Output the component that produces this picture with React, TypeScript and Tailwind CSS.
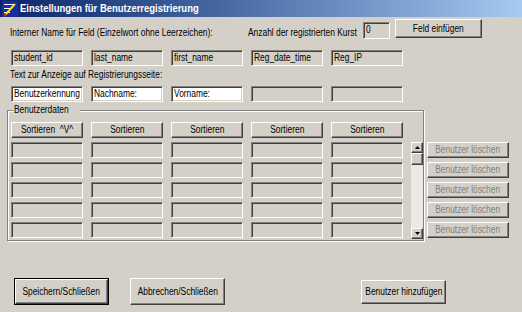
import React from 'react';

const sunken =
  'border border-t-[#808080] border-l-[#808080] border-b-white border-r-white shadow-[inset_1px_1px_0_#404040,inset_-1px_-1px_0_#d4d0c8]';
const raised =
  'border border-t-white border-l-white border-b-[#404040] border-r-[#404040] shadow-[inset_-1px_-1px_0_#808080] bg-[#d4d0c8]';

// MS Sans Serif is narrow: squeeze Arial-width text horizontally
const T = ({ children, center = false }: { children: React.ReactNode; center?: boolean }) => (
  <span className={`inline-block whitespace-pre scale-x-[0.84] ${center ? 'origin-center' : 'origin-left'}`}>
    {children}
  </span>
);

const Field = ({ value = '', white = false }: { value?: string; white?: boolean }) => (
  <div
    className={`${sunken} ${white ? 'bg-white' : 'bg-[#d4d0c8]'} w-[72px] h-[16px] pl-[2px] flex items-center overflow-hidden leading-none`}
  >
    {value && <T>{value}</T>}
  </div>
);

const Btn = ({ label, className = '' }: { label: string; className?: string }) => (
  <button className={`${raised} flex items-center justify-center leading-none ${className}`}>
    <T center>{label}</T>
  </button>
);

const TitleIcon = () => (
  <svg width="16" height="16" viewBox="0 0 16 16">
    <rect x="0" y="0" width="16" height="16" fill="#1c2c9c" />
    <rect x="2" y="3" width="11" height="1" fill="#fff" />
    <rect x="2" y="7" width="8" height="1" fill="#fff" />
    <rect x="2" y="11" width="6" height="1" fill="#fff" />
    <path d="M3 14 L13 3" stroke="#f6e21a" strokeWidth="2" />
    <path d="M2 15 L4 13" stroke="#e02020" strokeWidth="2" />
  </svg>
);

const Arrow = ({ up }: { up?: boolean }) => (
  <svg width="5" height="3" viewBox="0 0 5 3">
    <path d={up ? 'M2.5 0 L5 3 L0 3 Z' : 'M0 0 L5 0 L2.5 3 Z'} fill="#000" />
  </svg>
);

export default function App() {
  const cols = ['student_id', 'last_name', 'first_name', 'Reg_date_time', 'Reg_IP'];
  const labels = ['Benutzerkennung', 'Nachname:', 'Vorname:', '', ''];
  const rows = [0, 1, 2, 3, 4];

  return (
    <div className="w-[522px] h-[312px] bg-[#d4d0c8] flex flex-col font-['Liberation_Sans',Arial,sans-serif] text-[10px] text-black overflow-hidden">
      <div className="h-[17px] bg-linear-to-r from-[#0a246a] to-[#a6caf0] flex items-center pl-[2px] gap-[2px]">
        <TitleIcon />
        <span className="inline-block whitespace-nowrap origin-left scale-x-[0.86] font-bold text-[11px] text-white">
          Einstellungen für Benutzerregistrierung
        </span>
      </div>

      <div className="flex items-start mt-[2px] h-[21px]">
        <div className="w-[248px] pl-[10px] mt-[8px] leading-[12px]">
          <T>Interner Name für Feld (Einzelwort ohne Leerzeichen):</T>
        </div>
        <div className="w-[115px] mt-[8px] leading-[12px]">
          <T>Anzahl der registrierten Kurst</T>
        </div>
        <div className={`${sunken} w-[27px] h-[17px] mt-[3px] pl-[2px] leading-[14px]`}>
          <T>0</T>
        </div>
        <Btn label="Feld einfügen" className="ml-[5px] w-[87px] h-[19px]" />
      </div>

      <div className="flex pl-[11px] gap-[8px] mt-[10px]">
        {cols.map((c) => (
          <Field key={c} value={c} />
        ))}
      </div>

      <div className="pl-[10px] mt-[3px] leading-[12px]">
        <T>Text zur Anzeige auf Registrierungsseite:</T>
      </div>

      <div className="flex pl-[11px] gap-[8px] mt-[5px]">
        {labels.map((l, i) => (
          <Field key={i} value={l} white={i < 3} />
        ))}
      </div>

      <div className="flex items-start mt-[2px]">
        <fieldset className="ml-[7px] w-[417px] border border-[#808080] shadow-[inset_1px_1px_0_#fff,1px_1px_0_#fff] pl-[3px] pb-[1px]">
          <legend className="ml-[2px] px-[1px] leading-[12px] bg-[#d4d0c8]">
            <T>Benutzerdaten</T>
          </legend>
          <div className="flex gap-[8px] mt-[6px]">
            <div className="flex flex-col gap-[4px]">
              <div className="flex gap-[8px]">
                <Btn label="Sortieren  ^V^" className="w-[72px] h-[16px]" />
                <Btn label="Sortieren" className="w-[72px] h-[16px]" />
                <Btn label="Sortieren" className="w-[72px] h-[16px]" />
                <Btn label="Sortieren" className="w-[72px] h-[16px]" />
                <Btn label="Sortieren" className="w-[72px] h-[16px]" />
              </div>
              {rows.map((r) => (
                <div key={r} className="flex gap-[8px]">
                  {cols.map((c) => (
                    <Field key={c} />
                  ))}
                </div>
              ))}
            </div>
            <div className="mt-[20px] w-[12px] h-[97px] flex flex-col bg-[#ebe9e5]">
              <div className={`${raised} h-[11px] flex items-center justify-center`}>
                <Arrow up />
              </div>
              <div className={`${raised} h-[12px]`} />
              <div className="flex-1" />
              <div className={`${raised} h-[11px] flex items-center justify-center`}>
                <Arrow />
              </div>
            </div>
          </div>
        </fieldset>
        <div className="ml-[3px] mt-[38px] flex flex-col gap-[4px] text-[#808080] [text-shadow:1px_1px_0_#fff]">
          {rows.map((r) => (
            <Btn key={r} label="Benutzer löschen" className="w-[82px] h-[16px]" />
          ))}
        </div>
      </div>

      <div className="flex items-start mt-[37px]">
        <div className="ml-[14px] border border-black">
          <Btn label="Speichern/Schließen" className="w-[93px] h-[25px]" />
        </div>
        <Btn label="Abbrechen/Schließen" className="ml-[21px] w-[95px] h-[27px]" />
        <Btn label="Benutzer hinzufügen" className="ml-[136px] mt-[2px] w-[85px] h-[24px]" />
      </div>
    </div>
  );
}
